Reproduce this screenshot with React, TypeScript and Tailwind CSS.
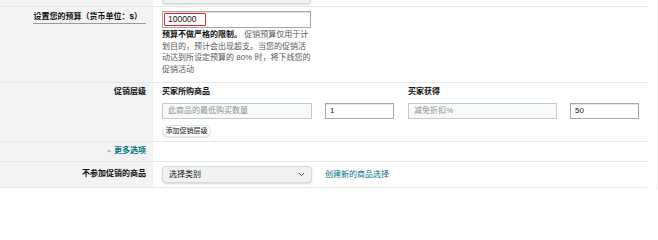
import { ChevronDown, ChevronUp } from "lucide-react"

const font = "font-['Liberation_Sans','Noto_Sans_CJK_SC',sans-serif]"

function Row({ label, height, children }: { label: React.ReactNode; height: string; children: React.ReactNode }) {
  return (
    <div className={`grid grid-cols-[153px_1fr] border-b border-[#e7e7e7] ${height}`}>
      <div className="bg-[#f3f3f3] pr-[7px] text-right">{label}</div>
      <div className="pl-[9px]">{children}</div>
    </div>
  )
}

export default function App() {
  return (
    <div className={`flex h-[210px] w-[658px] overflow-hidden bg-white text-[8px] text-[#0f1111] ${font}`}>
      <div className="w-[647px]">
        {/* bottom edge of the field above */}
        <Row label={null} height="h-[7px]">
          <div className="h-[6px] overflow-hidden">
            <div className="-mt-[16px] h-[20px] w-[149px] rounded-[4px] border border-[#d5d9d9] bg-[#f0f2f2] shadow-[0_1px_2px_rgba(15,17,17,0.15)]" />
          </div>
        </Row>

        {/* budget */}
        <Row
          height="h-[76px]"
          label={
            <div className="pt-[4px]">
              <span className="inline-block border-b border-[#9a9a9a] pb-[1px] pl-[1px] pr-[4px] font-bold leading-[10px]">
                设置您的预算（货币单位：$）
              </span>
            </div>
          }
        >
          <div className="pt-[4px]">
            <div className="flex h-[17px] w-[149px] items-center border border-[#a6a6a6] bg-white px-[1px] shadow-[inset_0_1px_0_rgba(15,17,17,0.12)]">
              <span className="flex h-[13px] w-[42px] items-center rounded-[1px] border border-[#e0262b] pl-[3px] text-[8.5px] text-[#0f1111]">
                100000
              </span>
            </div>
            <p className="mt-[1px] w-[149px] leading-[11.5px] text-[#565959]">
              <span className="font-bold text-[#0f1111]">预算不做严格的限制。</span> 促销预算仅用于计划目的，预计会出现超支。当您的促销活动达到所设定预算的 80% 时，将下线您的促销活动
            </p>
          </div>
        </Row>

        {/* tiers */}
        <Row
          height="h-[59px]"
          label={<div className="pt-[4px] font-bold leading-[10px]">促销层级</div>}
        >
          <div className="pt-[4px]">
            <div className="grid grid-cols-[150px_69px_150px_69px] gap-x-[13px]">
              <div className="col-span-2 font-bold leading-[10px]">买家所购商品</div>
              <div className="col-span-2 pl-[1px] font-bold leading-[10px]">买家获得</div>
              <div className="mt-[6px] flex h-[16px] items-center border border-[#c4c9c9] bg-[#f7fafa] pl-[5px] text-[#8d9096]">
                此商品的最低购买数量
              </div>
              <div className="mt-[6px] flex h-[16px] items-center border border-[#a6a6a6] bg-white pl-[4px] shadow-[inset_0_1px_0_rgba(15,17,17,0.1)]">
                1
              </div>
              <div className="mt-[6px] ml-[1px] flex h-[16px] items-center border border-[#c4c9c9] bg-[#f7fafa] pl-[5px] text-[#8d9096]">
                减免折扣%
              </div>
              <div className="mt-[6px] flex h-[16px] items-center border border-[#a6a6a6] bg-white pl-[4px] shadow-[inset_0_1px_0_rgba(15,17,17,0.1)]">
                50
              </div>
            </div>
            <button className="mt-[6px] flex h-[12px] w-[49px] items-center justify-center rounded-full border border-[#e3e6e6] bg-white text-[7px] text-[#0f1111] shadow-[0_1px_1px_rgba(15,17,17,0.12)]">
              添加促销层级
            </button>
          </div>
        </Row>

        {/* more options */}
        <Row
          height="h-[20px]"
          label={
            <div className="flex items-center justify-end gap-[2px] pt-[4px] leading-[10px]">
              <ChevronUp size={6} strokeWidth={3} className="text-[#565959]" />
              <span className="font-bold text-[#007185]">更多选项</span>
            </div>
          }
        >
          <div />
        </Row>

        {/* excluded products */}
        <Row
          height="h-[26px]"
          label={<div className="pt-[7px] font-bold leading-[10px]">不参加促销的商品</div>}
        >
          <div className="flex items-center gap-[13px] pt-[4px]">
            <div className="flex h-[17px] w-[150px] items-center justify-between rounded-[4px] border border-[#d5d9d9] bg-[#f0f2f2] pl-[6px] pr-[5px] shadow-[0_1px_2px_rgba(15,17,17,0.18)]">
              <span>选择类别</span>
              <ChevronDown size={9} strokeWidth={2.5} className="text-[#333]" />
            </div>
            <span className="text-[#007185]">创建新的商品选择</span>
          </div>
        </Row>
      </div>
      <div className="flex-1" />
      <div className="h-[190px] w-px bg-[#f0f0f0]" />
    </div>
  )
}
